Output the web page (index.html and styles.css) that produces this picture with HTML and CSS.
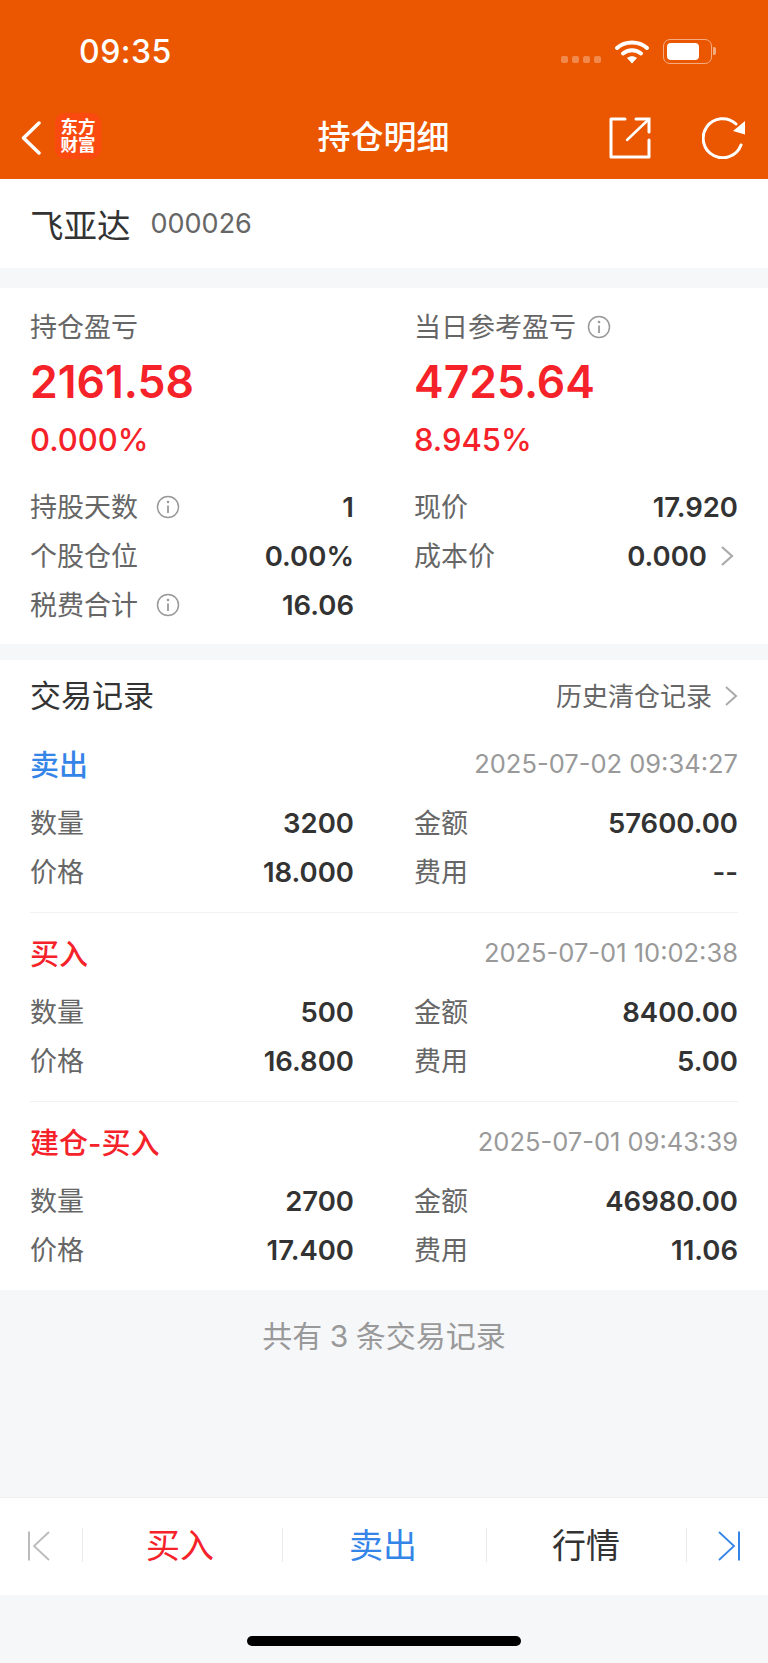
FILE: index.html
```html
<!DOCTYPE html>
<html lang="zh-CN">
<head>
    <meta charset="UTF-8">
    <meta name="viewport" content="width=device-width, initial-scale=1.0">
    <title>持仓明细</title>
    <link rel="stylesheet" href="styles.css">
</head>
<body>
    <div class="page">
        <header class="top">
            <div class="status">
                <span class="time">09:35</span>
                <div class="status-icons">
                    <div class="signal"><i></i><i></i><i></i><i></i></div>
                    <svg class="wifi" width="34" height="25" viewBox="0 0 34 25">
                        <path d="M2 9 C10 1.500 24 1.500 32 9" fill="none" stroke="#fff" stroke-width="4" stroke-linecap="round"/>
                        <path d="M8 14.500 C13 10 21 10 26 14.500" fill="none" stroke="#fff" stroke-width="4" stroke-linecap="round"/>
                        <path d="M12 19 C15 16.500 19 16.500 22 19 L17 24.500 Z" fill="#fff"/>
                    </svg>
                    <div class="battery"><div class="battery-body"><div class="battery-fill"></div></div><div class="battery-nub"></div></div>
                </div>
            </div>
            <nav class="nav">
                <div class="nav-left">
                    <svg width="20" height="34" viewBox="0 0 20 34">
                        <path d="M18 2 L2.500 17 L18 32" fill="none" stroke="#fff" stroke-width="3.500" stroke-linecap="round" stroke-linejoin="round"/>
                    </svg>
                    <div class="logo"><span>东方</span><span>财富</span></div>
                </div>
                <h1 class="nav-title">持仓明细</h1>
                <div class="nav-right">
                    <svg width="42" height="42" viewBox="0 0 42 42">
                        <path d="M16 2 H2 V40 H40 V23" fill="none" stroke="#fff" stroke-width="3" stroke-linejoin="round" stroke-linecap="round"/>
                        <path d="M27 2 H40 V15" fill="none" stroke="#fff" stroke-width="3" stroke-linecap="round"/>
                        <path d="M18 23 L39 3" fill="none" stroke="#fff" stroke-width="2.500" stroke-linecap="round"/>
                    </svg>
                    <svg width="44" height="42" viewBox="0 0 44 42">
                        <path d="M34 7 A19.500 19.500 0 1 0 39 28" fill="none" stroke="#fff" stroke-width="3" stroke-linecap="round"/>
                        <path d="M43 4 V17.500 L31 14 Z" fill="#fff"/>
                    </svg>
                </div>
            </nav>
        </header>

        <section class="stock">
            <span class="stock-name">飞亚达</span>
            <span class="stock-code">000026</span>
        </section>

        <section class="card summary">
            <div class="columns">
                <div>
                    <div class="head-label">持仓盈亏</div>
                    <div class="big-num">2161.58</div>
                    <div class="pct">0.000%</div>
                </div>
                <div>
                    <div class="head-label">当日参考盈亏
                        <svg class="info" width="24" height="24" viewBox="0 0 24 24"><circle cx="12" cy="12" r="10.500" fill="none" stroke="#999" stroke-width="1.500"/><circle cx="12" cy="7" r="1.300" fill="#999"/><path d="M12 10.500 V18" stroke="#999" stroke-width="1.800"/></svg>
                    </div>
                    <div class="big-num">4725.64</div>
                    <div class="pct">8.945%</div>
                </div>
            </div>
            <div class="columns stats">
                <div>
                    <div class="row"><span class="label">持股天数
                        <svg class="info" width="24" height="24" viewBox="0 0 24 24"><circle cx="12" cy="12" r="10.500" fill="none" stroke="#999" stroke-width="1.500"/><circle cx="12" cy="7" r="1.300" fill="#999"/><path d="M12 10.500 V18" stroke="#999" stroke-width="1.800"/></svg>
                    </span><span class="value">1</span></div>
                    <div class="row"><span class="label">个股仓位</span><span class="value">0.00%</span></div>
                    <div class="row"><span class="label">税费合计
                        <svg class="info" width="24" height="24" viewBox="0 0 24 24"><circle cx="12" cy="12" r="10.500" fill="none" stroke="#999" stroke-width="1.500"/><circle cx="12" cy="7" r="1.300" fill="#999"/><path d="M12 10.500 V18" stroke="#999" stroke-width="1.800"/></svg>
                    </span><span class="value">16.06</span></div>
                </div>
                <div>
                    <div class="row"><span class="label">现价</span><span class="value">17.920</span></div>
                    <div class="row"><span class="label">成本价</span>
                        <span class="value with-arrow">0.000
                            <svg class="arrow" width="14" height="22" viewBox="0 0 14 22"><path d="M2 2 L12 11 L2 20" fill="none" stroke="#aaa" stroke-width="2.200"/></svg>
                        </span>
                    </div>
                </div>
            </div>
        </section>

        <section class="card records">
            <div class="records-head">
                <h2 class="records-title">交易记录</h2>
                <span class="history">历史清仓记录
                    <svg class="arrow" width="14" height="22" viewBox="0 0 14 22"><path d="M2 2 L12 11 L2 20" fill="none" stroke="#aaa" stroke-width="2"/></svg>
                </span>
            </div>

            <div class="trade">
                <div class="trade-head"><span class="trade-type sell">卖出</span><span class="trade-date">2025-07-02 09:34:27</span></div>
                <div class="columns">
                    <div>
                        <div class="row"><span class="label">数量</span><span class="value">3200</span></div>
                        <div class="row"><span class="label">价格</span><span class="value">18.000</span></div>
                    </div>
                    <div>
                        <div class="row"><span class="label">金额</span><span class="value">57600.00</span></div>
                        <div class="row"><span class="label">费用</span><span class="value">--</span></div>
                    </div>
                </div>
            </div>

            <div class="trade">
                <div class="trade-head"><span class="trade-type buy">买入</span><span class="trade-date">2025-07-01 10:02:38</span></div>
                <div class="columns">
                    <div>
                        <div class="row"><span class="label">数量</span><span class="value">500</span></div>
                        <div class="row"><span class="label">价格</span><span class="value">16.800</span></div>
                    </div>
                    <div>
                        <div class="row"><span class="label">金额</span><span class="value">8400.00</span></div>
                        <div class="row"><span class="label">费用</span><span class="value">5.00</span></div>
                    </div>
                </div>
            </div>

            <div class="trade">
                <div class="trade-head"><span class="trade-type buy">建仓-买入</span><span class="trade-date">2025-07-01 09:43:39</span></div>
                <div class="columns">
                    <div>
                        <div class="row"><span class="label">数量</span><span class="value">2700</span></div>
                        <div class="row"><span class="label">价格</span><span class="value">17.400</span></div>
                    </div>
                    <div>
                        <div class="row"><span class="label">金额</span><span class="value">46980.00</span></div>
                        <div class="row"><span class="label">费用</span><span class="value">11.06</span></div>
                    </div>
                </div>
            </div>
        </section>

        <div class="note">共有 3 条交易记录</div>
        <div class="spacer"></div>

        <div class="actions">
            <div class="action first">
                <svg width="22" height="30" viewBox="0 0 22 30"><path d="M1 0.500 V29.500" stroke="#bbb" stroke-width="2"/><path d="M21 1 L6 15 L21 29" fill="none" stroke="#bbb" stroke-width="1.800"/></svg>
            </div>
            <div class="action buy">买入</div>
            <div class="action sell">卖出</div>
            <div class="action quote">行情</div>
            <div class="action last">
                <svg width="22" height="30" viewBox="0 0 22 30"><path d="M21 0.500 V29.500" stroke="#3585e8" stroke-width="2"/><path d="M1 1 L16 15 L1 29" fill="none" stroke="#3585e8" stroke-width="1.800"/></svg>
            </div>
        </div>
        <div class="home"><div class="home-bar"></div></div>
    </div>
</body>
</html>
```

FILE: styles.css
```css
* {
    box-sizing: border-box;
}
body {
    margin: 0;
    background-color: #F6F7F9;
    color: #333;
    font-family: Inter, "Noto Sans CJK SC", sans-serif;
}
h1, h2 {
    margin: 0;
    font-weight: 400;
}
.page {
    display: flex;
    flex-direction: column;
    height: 1663px;
    overflow: hidden;
}

/* orange header */
.top {
    background-color: #EB5600;
    color: #fff;
    height: 179px;
}
.status {
    display: flex;
    justify-content: space-between;
    align-items: center;
    height: 102px;
    padding: 0 52px 0 79px;
}
.time {
    font-size: 32px;
    font-weight: 500;
    letter-spacing: 0.5px;
}
.status-icons {
    display: flex;
    align-items: center;
    gap: 14px;
}
.signal {
    display: flex;
    gap: 4px;
    padding-top: 16px;
}
.signal i {
    width: 7px;
    height: 7px;
    border-radius: 2px;
    background-color: rgba(255, 255, 255, 0.3);
}
.battery {
    display: flex;
    align-items: center;
    gap: 1px;
}
.battery-body {
    width: 49px;
    height: 25px;
    padding: 3px;
    border: 1.5px solid rgba(255, 255, 255, 0.5);
    border-radius: 7px;
}
.battery-fill {
    width: 32px;
    height: 100%;
    background-color: #fff;
    border-radius: 4px;
}
.battery-nub {
    width: 3px;
    height: 8px;
    background-color: rgba(255, 255, 255, 0.5);
    border-radius: 0 2px 2px 0;
}
.nav {
    display: grid;
    grid-template-columns: 1fr auto 1fr;
    align-items: center;
    height: 73px;
    padding: 0 22px 0 21px;
    margin-top: -1px;
}
.nav-left {
    display: flex;
    align-items: center;
    gap: 14px;
}
.logo {
    display: flex;
    flex-direction: column;
    align-items: center;
    justify-content: center;
    width: 46px;
    height: 46px;
    margin-top: -4px;
    background-color: #FB4A10;
    border-radius: 10px;
    font-size: 17.5px;
    font-weight: 700;
    line-height: 18px;
}
.nav-title {
    font-size: 33px;
    font-weight: 500;
    padding-bottom: 6px;
}
.nav-right {
    display: flex;
    justify-content: flex-end;
    align-items: center;
    gap: 51px;
}

/* white sections */
.stock {
    display: flex;
    align-items: center;
    gap: 20px;
    height: 89px;
    padding: 0 30px;
    background-color: #fff;
}
.stock-name {
    font-size: 33.5px;
}
.stock-code {
    font-size: 27px;
    color: #666;
}
.card {
    background-color: #fff;
}
.columns {
    display: grid;
    grid-template-columns: 323px 323px;
    column-gap: 61px;
}
.summary {
    margin-top: 20px;
    height: 356px;
    padding: 20px 30px 0;
}
.head-label {
    display: flex;
    align-items: center;
    gap: 11px;
    height: 38px;
    padding-bottom: 4px;
    font-size: 27px;
    color: #666;
}
.head-label .info {
    margin-top: 4px;
}
.big-num {
    height: 72px;
    line-height: 72px;
    font-size: 44.5px;
    font-weight: 600;
    color: #F5222A;
}
.pct {
    height: 44px;
    line-height: 44px;
    font-size: 31px;
    font-weight: 500;
    color: #F5222A;
}
.stats {
    margin-top: 20px;
}
.row {
    display: flex;
    justify-content: space-between;
    align-items: center;
    height: 49px;
}
.label {
    display: flex;
    align-items: center;
    gap: 18px;
    padding-bottom: 3px;
    font-size: 27px;
    color: #666;
}
.label .info {
    margin-top: 3px;
}
.value {
    margin-right: -1px;
    font-size: 27.5px;
    font-weight: 600;
    color: #333;
}
.with-arrow {
    display: flex;
    align-items: center;
    gap: 13px;
    margin-right: 3px;
}

/* trade list */
.records {
    margin-top: 16px;
    padding: 0 30px;
}
.records-head {
    display: flex;
    justify-content: space-between;
    align-items: center;
    height: 72px;
    margin-bottom: -8px;
}
.records-title {
    font-size: 31px;
    padding-bottom: 5px;
}
.history {
    display: flex;
    align-items: center;
    gap: 12px;
    padding-bottom: 3px;
    font-size: 26px;
    color: #666;
}
.history .arrow {
    margin-top: 3px;
}
.trade {
    padding: 8px 0 16px;
    border-bottom: 1px solid #F2F2F4;
}
.trade:last-child {
    border-bottom: none;
}
.trade-head {
    display: flex;
    justify-content: space-between;
    align-items: center;
    height: 66px;
}
.trade-type {
    font-size: 29px;
    font-weight: 500;
    padding-bottom: 4px;
}
.sell {
    color: #3585E8;
}
.buy {
    color: #F5222A;
}
.trade-date {
    font-size: 25.5px;
    padding-bottom: 3px;
    color: #999;
}
.note {
    height: 88px;
    padding-top: 2px;
    line-height: 88px;
    text-align: center;
    font-size: 30px;
    word-spacing: -1px;
    color: #999;
}
.spacer {
    flex: 1;
}

/* bottom bar */
.actions {
    display: grid;
    grid-template-columns: 82px 200px 204px 200px 82px;
    height: 98px;
    background-color: #fff;
    border-top: 1px solid #EFEFF1;
}
.action {
    display: flex;
    align-items: center;
    justify-content: center;
    position: relative;
    font-size: 34px;
    padding-bottom: 6px;
}
.action.buy {
    padding-right: 4px;
}
.action.sell {
    padding-right: 2px;
}
.action.first,
.action.last {
    padding-bottom: 2px;
}
.action.first {
    padding-right: 5px;
}
.action.last {
    padding-left: 4px;
}
.action + .action::before {
    content: "";
    position: absolute;
    left: 0;
    top: 30px;
    height: 34px;
    border-left: 1px solid #E9E9EB;
}
.home {
    height: 68px;
    padding-top: 41px;
}
.home-bar {
    width: 274px;
    height: 10px;
    margin: 0 auto;
    background-color: #000;
    border-radius: 5px;
}
```
